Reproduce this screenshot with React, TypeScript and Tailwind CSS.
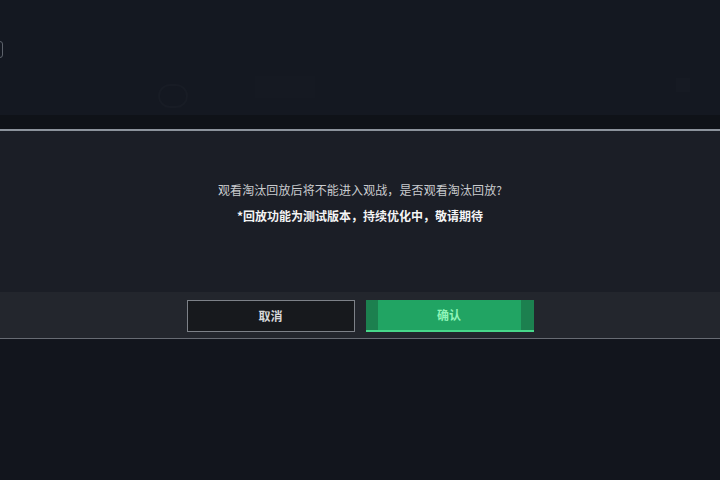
import React from 'react'

const FONT = { fontFamily: '"Noto Sans CJK SC", "Noto Sans", sans-serif' }

function ConfirmButton({ label }: { label: string }) {
  return (
    <button className="flex h-[32px] w-[168px] flex-col overflow-hidden bg-[#21a463]">
      <div className="flex flex-1">
        <span className="w-[12px] bg-[#1c804f]" />
        <span className="flex flex-1 items-center justify-center text-[12px] font-bold text-[#8ff5b8]">
          {label}
        </span>
        <span className="w-[13px] bg-[#1c804f]" />
      </div>
      <div className="h-[2px] bg-[#47d88a]" />
    </button>
  )
}

function CancelButton({ label }: { label: string }) {
  return (
    <button className="flex h-[32px] w-[168px] items-center justify-center border border-[#7d8188] bg-[#17191d] text-[12px] font-bold text-[#d6d7d9]">
      {label}
    </button>
  )
}

export default function App() {
  return (
    <div className="flex h-[480px] w-[720px] flex-col overflow-hidden bg-[#131720]" style={FONT}>
      {/* dimmed page behind the dialog */}
      <div className="relative h-[115px] bg-[#141821]">
        <div className="absolute left-[-4px] top-[41px] h-[17px] w-[7px] rounded-[3px] border border-[#5d626b]" />
        <div className="absolute left-[158px] top-[84px] h-[24px] w-[30px] rounded-full border-2 border-[#181c25]" />
        <div className="absolute left-[255px] top-[76px] h-[22px] w-[60px] bg-[#151922]" />
        <div className="absolute right-[30px] top-[78px] h-[14px] w-[14px] bg-[#161a23]" />
      </div>
      <div className="h-[14px] bg-[#0f1218]" />
      <div className="h-[2px] bg-[#8c939c]" />

      {/* dialog body */}
      <div className="flex h-[161px] flex-col items-center bg-[#1b1e26] pt-[51px]">
        <p className="text-[12px] leading-[16px] tracking-[0.1px] text-[#c9cbce]">
          观看淘汰回放后将不能进入观战，是否观看淘汰回放?
        </p>
        <p className="mt-[10px] text-[12px] font-bold leading-[16px] text-[#f4f4f5]">
          *回放功能为测试版本，持续优化中，敬请期待
        </p>
      </div>

      {/* dialog footer */}
      <div className="flex h-[47px] items-center justify-center gap-[11px] border-b border-[#676b73] bg-[#23262d] pt-[1px]">
        <CancelButton label="取消" />
        <ConfirmButton label="确认" />
      </div>

      <div className="flex-1 bg-[#12151d]" />
    </div>
  )
}
